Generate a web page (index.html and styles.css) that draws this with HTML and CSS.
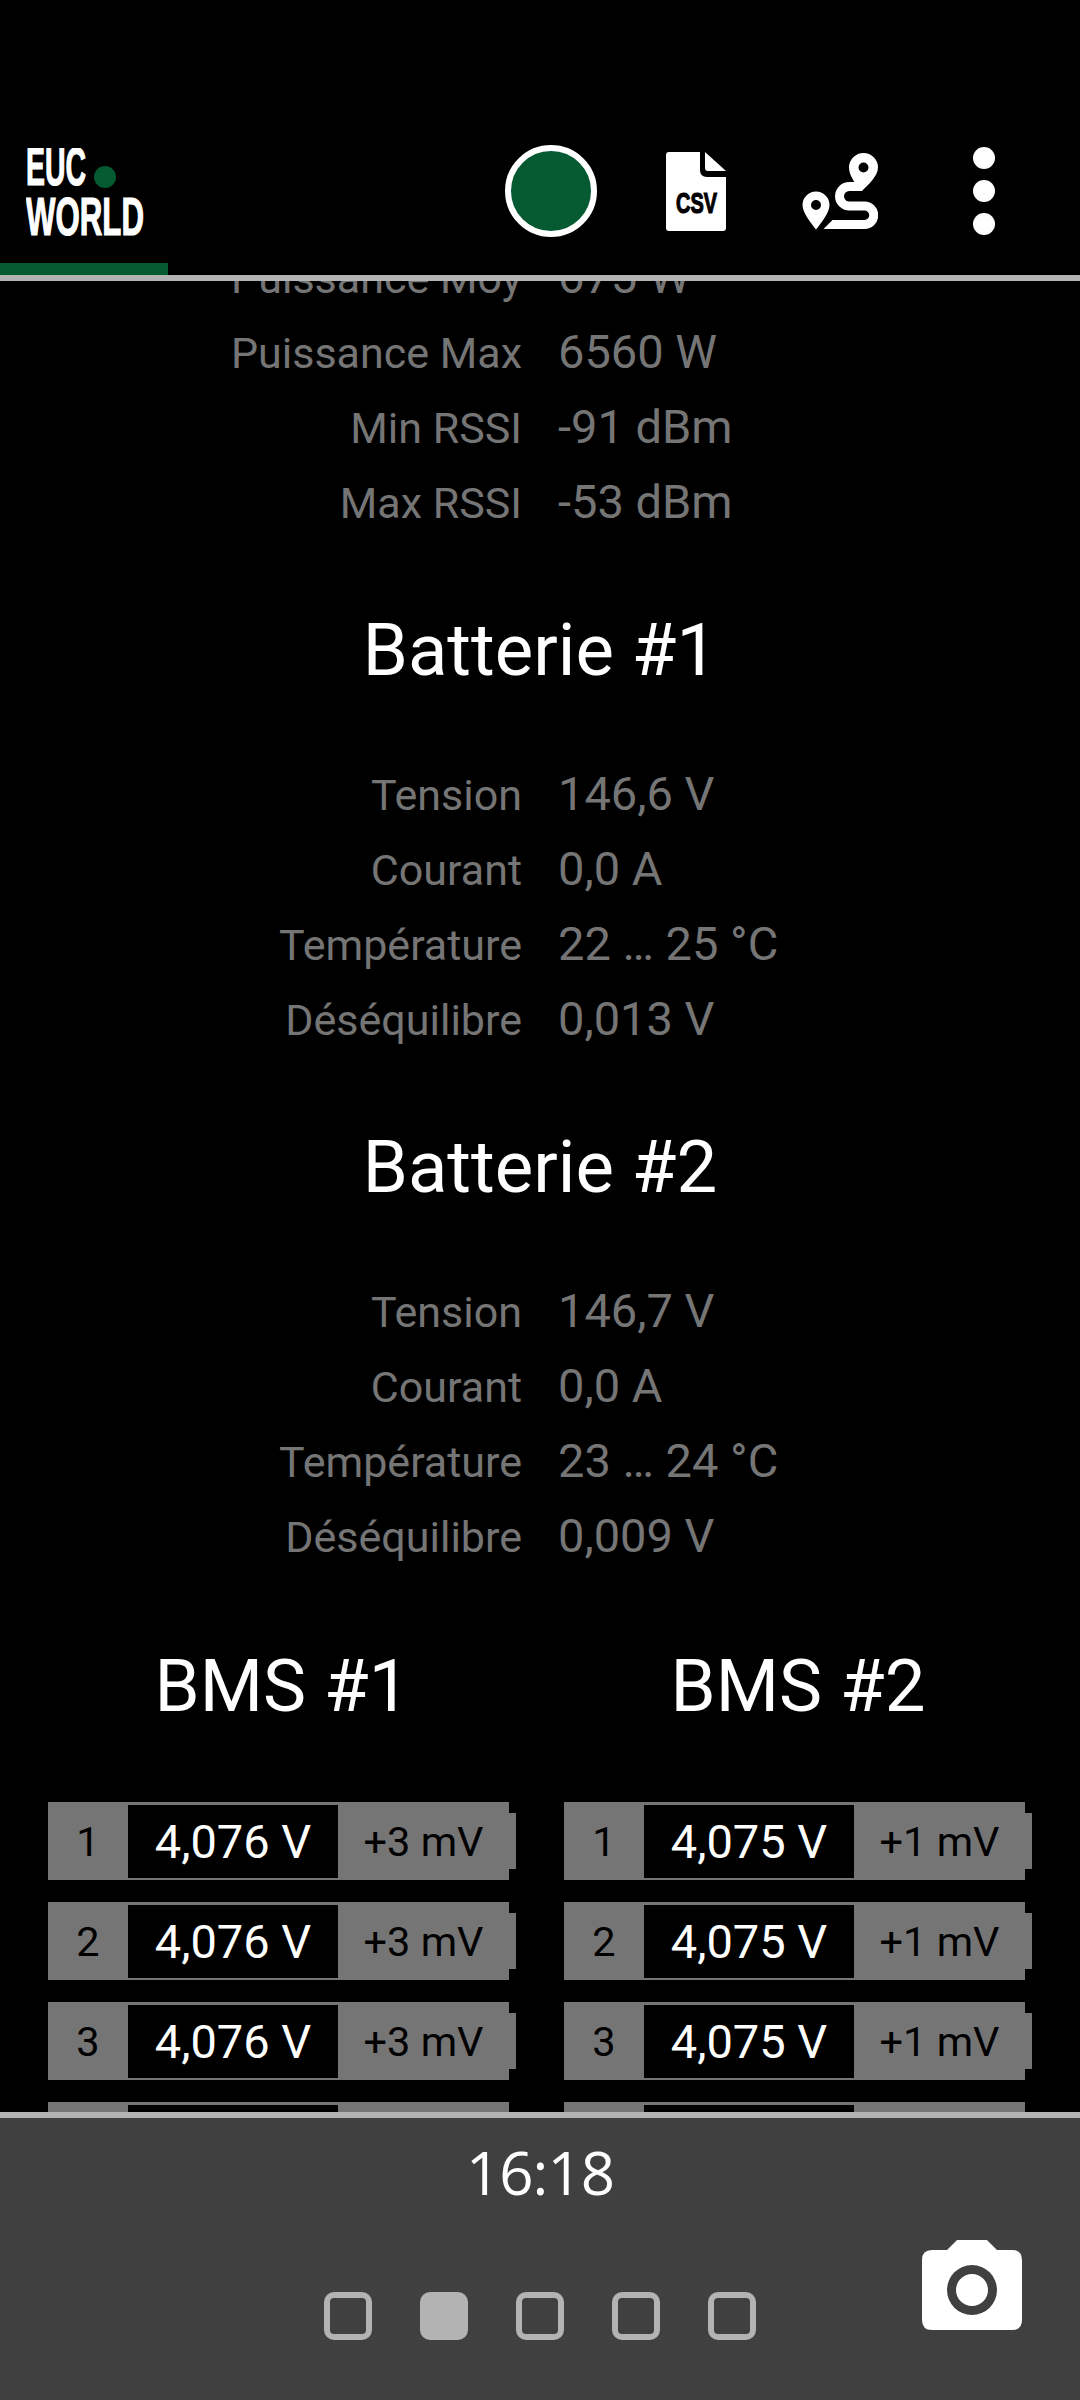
FILE: index.html
```html
<!DOCTYPE html>
<html lang="fr">
<head>
    <meta charset="UTF-8">
    <meta name="viewport" content="width=device-width, initial-scale=1.0">
    <title>EUC World</title>
    <link rel="stylesheet" href="styles.css">
</head>
<body>
    <header class="app-header">
        <div class="toolbar">
            <svg class="logo" width="130" height="95" viewBox="0 0 130 95">
                <text class="logo-text" x="0" y="37" textLength="60" lengthAdjust="spacingAndGlyphs">EUC</text>
                <circle class="logo-dot" cx="79" cy="29" r="11"/>
                <text class="logo-text" x="0" y="87" textLength="118" lengthAdjust="spacingAndGlyphs">WORLD</text>
            </svg>
            <div class="actions">
                <div class="record-btn"></div>
                <svg class="icon-csv" width="60" height="79" viewBox="0 0 60 79">
                    <path class="icon-fill" d="M3 0H34V18Q34 25 41 25H60V76Q60 79 57 79H3Q0 79 0 76V3Q0 0 3 0Z"/>
                    <path class="icon-fill" d="M39 0L60 19H42Q39 19 39 16Z"/>
                    <text class="csv-text" x="10" y="61" textLength="41" lengthAdjust="spacingAndGlyphs">CSV</text>
                </svg>
                <svg class="icon-route" width="76" height="77" viewBox="0 0 76 77">
                    <path class="icon-fill" fill-rule="evenodd" d="M61.5 0A14.5 14.5 0 0 1 76 14.5C76 23 66 32 60 38C54 32 47 23 47 14.5A14.5 14.5 0 0 1 61.5 0ZM61.5 9.5A5 5 0 1 0 61.5 19.5A5 5 0 1 0 61.5 9.5Z"/>
                    <path class="icon-fill" fill-rule="evenodd" d="M14 38.5A13.5 13.5 0 0 1 27.5 52C27.5 60 19 70 14 76.5C9 70 0.5 60 0.5 52A13.5 13.5 0 0 1 14 38.5ZM14 47A5 5 0 1 0 14 57A5 5 0 1 0 14 47Z"/>
                    <path class="route-line" d="M60 33.5H47.25A9.75 9.75 0 0 0 47.25 53H62.5A9.25 9.25 0 0 1 62.5 71.5H30"/>
                    <path class="icon-fill" d="M30.5 67L21.5 76H30.5Z"/>
                </svg>
                <div class="more-btn">
                    <span class="more-dot"></span>
                    <span class="more-dot"></span>
                    <span class="more-dot"></span>
                </div>
            </div>
        </div>
        <div class="tab-indicator"></div>
    </header>

    <main class="content">
        <dl class="stats stats-first">
            <div class="stat"><dt>Puissance Moy</dt><dd>675 W</dd></div>
            <div class="stat"><dt>Puissance Max</dt><dd>6560 W</dd></div>
            <div class="stat"><dt>Min RSSI</dt><dd>-91 dBm</dd></div>
            <div class="stat"><dt>Max RSSI</dt><dd>-53 dBm</dd></div>
        </dl>

        <h2 class="section-title">Batterie #1</h2>
        <dl class="stats">
            <div class="stat"><dt>Tension</dt><dd>146,6 V</dd></div>
            <div class="stat"><dt>Courant</dt><dd>0,0 A</dd></div>
            <div class="stat"><dt>Température</dt><dd>22 … 25 °C</dd></div>
            <div class="stat"><dt>Déséquilibre</dt><dd>0,013 V</dd></div>
        </dl>

        <h2 class="section-title">Batterie #2</h2>
        <dl class="stats">
            <div class="stat"><dt>Tension</dt><dd>146,7 V</dd></div>
            <div class="stat"><dt>Courant</dt><dd>0,0 A</dd></div>
            <div class="stat"><dt>Température</dt><dd>23 … 24 °C</dd></div>
            <div class="stat"><dt>Déséquilibre</dt><dd>0,009 V</dd></div>
        </dl>

        <div class="bms-grid">
            <section class="bms">
                <h2 class="section-title bms-title">BMS #1</h2>
                <div class="cell"><div class="cell-body"><span class="cell-num">1</span><span class="cell-volt">4,076 V</span><span class="cell-diff">+3 mV</span></div></div>
                <div class="cell"><div class="cell-body"><span class="cell-num">2</span><span class="cell-volt">4,076 V</span><span class="cell-diff">+3 mV</span></div></div>
                <div class="cell"><div class="cell-body"><span class="cell-num">3</span><span class="cell-volt">4,076 V</span><span class="cell-diff">+3 mV</span></div></div>
                <div class="cell"><div class="cell-body"><span class="cell-num">4</span><span class="cell-volt">4,076 V</span><span class="cell-diff">+3 mV</span></div></div>
            </section>
            <section class="bms">
                <h2 class="section-title bms-title">BMS #2</h2>
                <div class="cell"><div class="cell-body"><span class="cell-num">1</span><span class="cell-volt">4,075 V</span><span class="cell-diff">+1 mV</span></div></div>
                <div class="cell"><div class="cell-body"><span class="cell-num">2</span><span class="cell-volt">4,075 V</span><span class="cell-diff">+1 mV</span></div></div>
                <div class="cell"><div class="cell-body"><span class="cell-num">3</span><span class="cell-volt">4,075 V</span><span class="cell-diff">+1 mV</span></div></div>
                <div class="cell"><div class="cell-body"><span class="cell-num">4</span><span class="cell-volt">4,075 V</span><span class="cell-diff">+1 mV</span></div></div>
            </section>
        </div>
    </main>

    <footer class="app-footer">
        <div class="clock">16:18</div>
        <div class="footer-row">
            <div class="pager">
                <span class="page"></span>
                <span class="page page-active"></span>
                <span class="page"></span>
                <span class="page"></span>
                <span class="page"></span>
            </div>
            <svg class="icon-camera" width="100" height="90" viewBox="0 0 100 90">
                <path class="icon-fill" fill-rule="evenodd" d="M10 10H25L35 0H65L75 10H90Q100 10 100 20V80Q100 90 90 90H10Q0 90 0 80V20Q0 10 10 10ZM50 25A25 25 0 1 0 50 75A25 25 0 1 0 50 25ZM50 34A16 16 0 1 1 50 66A16 16 0 1 1 50 34Z"/>
            </svg>
        </div>
    </footer>
</body>
</html>
```

FILE: styles.css
```css
:root {
    --green: #065a32;
    --line: #b3b3b3;
    --muted: #757575;
    --footer: #404040;
}

* {
    box-sizing: border-box;
}

html, body {
    height: 100%;
}

body {
    margin: 0;
    display: flex;
    flex-direction: column;
    height: 2400px;
    overflow: hidden;
    background-color: #000;
    color: #fff;
    font-family: Roboto, "Liberation Sans", sans-serif;
}

/* header */
.app-header {
    flex: none;
    height: 281px;
    padding-top: 145px;
    border-bottom: 6px solid var(--line);
}

.toolbar {
    display: flex;
    justify-content: space-between;
    align-items: flex-start;
    height: 92px;
}

.logo {
    margin-left: 26px;
    margin-top: 3px;
}

.logo-text {
    font-family: "Liberation Sans", sans-serif;
    font-size: 53px;
    font-weight: 700;
    fill: #fff;
    stroke: #fff;
    stroke-width: 1.2px;
}

.logo-dot {
    fill: var(--green);
}

.actions {
    display: flex;
    align-items: center;
    margin-right: 85px;
}

.record-btn {
    width: 92px;
    height: 92px;
    border: 6px solid #fff;
    border-radius: 50%;
    background-color: var(--green);
}

.icon-csv {
    margin-left: 69px;
}

.icon-route {
    margin-left: 76px;
}

.icon-fill {
    fill: #fff;
}

.csv-text {
    font-family: "Liberation Sans", sans-serif;
    font-size: 29px;
    font-weight: 700;
    fill: #000;
    stroke: #000;
    stroke-width: 1.2px;
}

.route-line {
    fill: none;
    stroke: #fff;
    stroke-width: 9;
}

.more-btn {
    display: flex;
    flex-direction: column;
    gap: 11px;
    margin-left: 95px;
}

.more-dot {
    width: 22px;
    height: 22px;
    border-radius: 50%;
    background-color: #fff;
}

.tab-indicator {
    width: 168px;
    height: 12px;
    margin-top: 26px;
    background-color: var(--green);
}

/* scrolled content */
.content {
    flex: 1;
    min-height: 0;
    overflow: hidden;
}

.stats {
    margin: 0;
}

.stats-first {
    margin-top: -40px;
}

.stat {
    display: grid;
    grid-template-columns: 522px 1fr;
    column-gap: 36px;
    align-items: baseline;
    height: 75px;
    line-height: 71px;
    color: var(--muted);
}

.stat dt {
    font-size: 43px;
    text-align: right;
}

.stat dd {
    margin: 0;
    font-size: 47px;
}

.section-title {
    height: 100px;
    margin: 60px 0 57px;
    font-size: 72.5px;
    font-weight: 400;
    line-height: 100px;
    text-align: center;
}

.bms-grid {
    display: grid;
    grid-template-columns: 468px 468px;
    column-gap: 48px;
    padding-left: 48px;
}

.bms-title {
    margin-top: 62px;
    margin-bottom: 65px;
}

.cell {
    display: flex;
    align-items: center;
    margin-bottom: 22px;
}

/* the small tab on the right makes the row look like a battery */
.cell::after {
    content: "";
    width: 7px;
    height: 56px;
    background-color: var(--muted);
}

.cell-body {
    display: grid;
    grid-template-columns: 80px 210px 171px;
    width: 461px;
    height: 78px;
    padding: 3px 0;
    background-color: var(--muted);
    line-height: 73px;
    text-align: center;
    color: #000;
    font-size: 41.5px;
}

.cell-volt {
    background-color: #000;
    color: #fff;
    font-size: 47px;
}

/* footer */
.app-footer {
    flex: none;
    height: 288px;
    border-top: 6px solid var(--line);
    background-color: var(--footer);
}

.clock {
    margin-top: 19px;
    font-family: "Open Sans", Roboto, sans-serif;
    font-size: 60px;
    letter-spacing: -1px;
    line-height: 70px;
    text-align: center;
}

.footer-row {
    display: grid;
    grid-template-columns: 1fr auto 1fr;
    align-items: end;
    height: 104px;
    margin-top: 29px;
}

.pager {
    grid-column: 2;
    display: flex;
    gap: 48px;
}

.page {
    width: 48px;
    height: 48px;
    border: 6px solid var(--line);
    border-radius: 10px;
}

.page-active {
    background-color: var(--line);
}

.icon-camera {
    justify-self: end;
    margin-right: 58px;
    margin-bottom: 10px;
}
```
